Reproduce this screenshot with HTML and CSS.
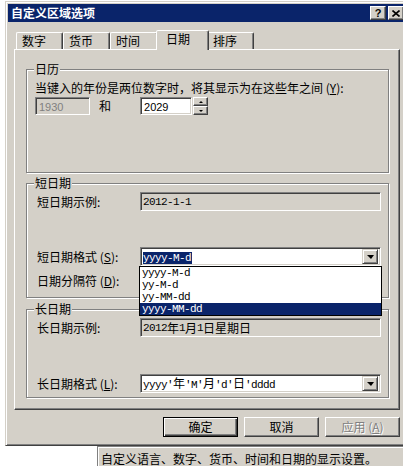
FILE: index.html
```html
<!DOCTYPE html>
<html lang="zh-CN">
<head>
  <meta charset="UTF-8" />
  <meta name="viewport" content="width=device-width, initial-scale=1" />
  <title>自定义区域选项</title>
  <link rel="stylesheet" href="styles.css">
</head>
<body>
  <div class="window">
    <div class="titlebar">
      <span>自定义区域选项</span>
      <div class="title-buttons">
        <span class="title-btn">?</span>
        <span class="title-btn">
          <svg width="8" height="7" viewBox="0 0 8 7"><path d="M0.5 0.5L7.5 6.5M7.5 0.5L0.5 6.5" stroke="#000" stroke-width="1.6" fill="none"/></svg>
        </span>
      </div>
    </div>

    <div class="client">
      <!-- tabs -->
      <div class="tabs">
        <div class="tab">数字</div>
        <div class="tab">货币</div>
        <div class="tab tab-wide">时间</div>
        <div class="tab active">日期</div>
        <div class="tab">排序</div>
      </div>

      <div class="panel">
        <!-- 日历 -->
        <div class="group group-cal">
          <div class="legend">日历</div>
          <div class="cal-text">当键入的年份是两位数字时，将其显示为在这些年之间 (<u>Y</u>):</div>
          <div class="cal-row">
            <div class="edit disabled">1930</div>
            <span class="and">和</span>
            <div class="edit year">2029</div>
            <div class="spin">
              <span class="spin-btn up"></span>
              <span class="spin-btn down"></span>
            </div>
          </div>
        </div>

        <!-- 短日期 -->
        <div class="group group-short">
          <div class="legend">短日期</div>
          <div class="field-row first">
            <span class="label">短日期示例:</span>
            <div class="box readonly"><span class="mono">2012-1-1</span></div>
          </div>
          <div class="field-row format">
            <span class="label">短日期格式 (<u>S</u>):</span>
            <div class="combo-wrap">
              <div class="box combo">
                <span class="combo-text"><span class="mono sel">yyyy-M-d</span></span>
                <span class="drop-btn"></span>
              </div>
              <div class="dropdown">
                <div class="item mono">yyyy-M-d</div>
                <div class="item mono">yy-M-d</div>
                <div class="item mono">yy-MM-dd</div>
                <div class="item mono selected">yyyy-MM-dd</div>
              </div>
            </div>
          </div>
          <div class="field-row sep">
            <span class="label">日期分隔符 (<u>D</u>):</span>
            <!-- liegt unter der aufgeklappten Liste -->
            <div class="box combo">
              <span class="combo-text"></span>
              <span class="drop-btn"></span>
            </div>
          </div>
        </div>

        <!-- 长日期 -->
        <div class="group group-long">
          <div class="legend">长日期</div>
          <div class="field-row first">
            <span class="label">长日期示例:</span>
            <div class="box readonly"><span class="mono">2012</span>年<span class="mono">1</span>月<span class="mono">1</span>日星期日</div>
          </div>
          <div class="field-row format-long">
            <span class="label">长日期格式 (<u>L</u>):</span>
            <div class="box combo">
              <span class="combo-text"><span class="mono">yyyy'</span>年<span class="mono">'M'</span>月<span class="mono">'d'</span>日<span class="mono">'dddd</span></span>
              <span class="drop-btn"></span>
            </div>
          </div>
        </div>
      </div>

      <div class="buttons">
        <div class="btn default">确定</div>
        <div class="btn">取消</div>
        <div class="btn disabled">应用 (<u>A</u>)</div>
      </div>
    </div>
  </div>

  <div class="status">自定义语言、数字、货币、时间和日期的显示设置。</div>
</body>
</html>
```

FILE: styles.css
```css
* {
  box-sizing: border-box;
}

body {
  margin: 0;
  width: 403px;
  height: 466px;
  overflow: hidden;
  background: #fff;
  color: #000;
  font-family: "Noto Sans CJK SC", "Liberation Sans", sans-serif;
  font-size: 12px;
  line-height: 14px;
}

u {
  text-decoration: underline;
  text-underline-offset: 1px;
}

/* Fenster */
.window {
  width: 404px;
  margin: 1px 0 0 5px;
  padding: 2px;
  background: #d4d0c8;
  border: 1px solid;
  border-color: #d4d0c8 #404040 #404040 #d4d0c8;
  box-shadow: inset 1px 1px 0 #fff, inset -1px -1px 0 #808080;
}

.titlebar {
  height: 18px;
  padding: 0 2px 0 3px;
  background: #0a246a;
  color: #fff;
  font-weight: bold;
  display: flex;
  align-items: center;
  justify-content: space-between;
}

.title-buttons {
  display: flex;
  gap: 2px;
}

.title-btn {
  width: 16px;
  height: 14px;
  display: flex;
  align-items: center;
  justify-content: center;
  background: #d4d0c8;
  color: #000;
  font: bold 11px "Liberation Sans", sans-serif;
  border: 1px solid;
  border-color: #fff #404040 #404040 #fff;
  box-shadow: inset -1px -1px 0 #808080;
}

.client {
  padding: 0 6px;
}

/* Registerkarten */
.tabs {
  display: flex;
  align-items: flex-end;
  height: 19px;
  margin: 8px 0 0 2px;
}

.tab {
  width: 47px;
  height: 17px;
  padding: 1px 0 0 5px;
  border: 1px solid;
  border-bottom: 0;
  border-color: #fff #404040 transparent #fff;
  border-radius: 2px 2px 0 0;
  box-shadow: inset -1px 0 0 #808080;
}

.tab-wide {
  width: 48px;
}

.tab.active {
  position: relative;
  z-index: 1;
  width: 53px;
  height: 20px;
  margin: 0 -2px -1px -2px;
  padding: 1px 0 0 9px;
  background: #d4d0c8;
}

.panel {
  height: 361px;
  padding: 0 10px 0 11px;
  border: 1px solid;
  border-color: #fff #404040 #404040 #fff;
  box-shadow: inset -1px -1px 0 #808080;
}

/* Gruppenrahmen */
.group {
  border: 1px solid #808080;
  box-shadow: 1px 1px 0 #fff, inset 1px 1px 0 #fff;
}

.legend {
  width: fit-content;
  margin: -8px 0 0 7px;
  padding: 0 1px;
  background: #d4d0c8;
}

.group-cal {
  margin-top: 19px;
  height: 104px;
}

.group-short {
  margin-top: 10px;
  height: 115px;
}

.group-long {
  margin-top: 11px;
  height: 89px;
}

.cal-text {
  margin: 5px 0 0 8px;
}

.cal-row {
  display: flex;
  align-items: center;
  margin: 2px 0 0 8px;
}

.edit {
  height: 18px;
  padding: 2px 0 0 3px;
  background: #fff;
  font-family: "Liberation Sans", sans-serif;
  font-size: 11px;
  line-height: 14px;
  border: 1px solid;
  border-color: #808080 #fff #fff #808080;
  box-shadow: inset 1px 1px 0 #404040, inset -1px -1px 0 #d4d0c8;
}

.edit.disabled {
  width: 55px;
  background: #d4d0c8;
  color: #808080;
}

.and {
  margin: 0 29px 0 9px;
}

.edit.year {
  width: 52px;
}

.spin {
  display: flex;
  flex-direction: column;
  width: 15px;
  height: 18px;
  margin-left: 1px;
}

.spin-btn {
  flex: 1;
  display: flex;
  align-items: center;
  justify-content: center;
  border: 1px solid;
  border-color: #fff #404040 #404040 #fff;
  box-shadow: inset -1px -1px 0 #808080;
}

.spin-btn::after {
  content: "";
  border-left: 2px solid transparent;
  border-right: 2px solid transparent;
}

.spin-btn.up::after {
  border-bottom: 2px solid #000;
}

.spin-btn.down::after {
  border-top: 2px solid #000;
}

/* Zeilen mit Beschriftung + Feld */
.field-row {
  display: flex;
  align-items: center;
  padding-left: 10px;
}

.field-row.first {
  margin-top: 2px;
}

.field-row.format {
  margin-top: 36px;
}

.field-row.sep {
  margin-top: 5px;
}

.field-row.format-long {
  margin-top: 37px;
}

.label {
  width: 103px;
  flex-shrink: 0;
}

.box {
  width: 241px;
  height: 19px;
  padding: 2px 0 0 2px;
  display: flex;
  align-items: center;
  border: 1px solid;
  border-color: #808080 #fff #fff #808080;
  box-shadow: inset 1px 1px 0 #404040, inset -1px -1px 0 #d4d0c8;
}

.box.readonly {
  align-items: flex-start;
  background: #d4d0c8;
}

.mono {
  font-family: "Liberation Mono", monospace;
  font-size: 11px;
  letter-spacing: -0.6px;
}

.combo {
  background: #fff;
  padding: 2px;
}

.combo-text {
  flex: 1;
  white-space: nowrap;
}

.sel {
  background: #0a246a;
  color: #fff;
  padding: 0 1px 0 0;
}

.drop-btn {
  width: 16px;
  height: 15px;
  display: flex;
  align-items: center;
  justify-content: center;
  background: #d4d0c8;
  border: 1px solid;
  border-color: #d4d0c8 #404040 #404040 #d4d0c8;
  box-shadow: inset 1px 1px 0 #fff, inset -1px -1px 0 #808080;
}

.drop-btn::after {
  content: "";
  border-left: 4px solid transparent;
  border-right: 3px solid transparent;
  border-top: 4px solid #000;
}

.combo-wrap {
  position: relative;
  width: 241px;
  height: 19px;
}

.combo-wrap .combo {
  height: 19px;
}

/* aufgeklappte Liste */
.dropdown {
  position: absolute;
  z-index: 2;
  left: -1px;
  top: 19px;
  width: 243px;
  background: #fff;
  border: 1px solid #000;
}

.item {
  height: 12px;
  line-height: 12px;
  padding-left: 2px;
}

.item.selected {
  background: #0a246a;
  color: #fff;
}

/* Schaltflaechen */
.buttons {
  display: flex;
  justify-content: flex-end;
  gap: 6px;
  margin: 7px 0 6px;
}

.btn {
  width: 75px;
  height: 20px;
  padding-top: 2px;
  text-align: center;
  border: 1px solid;
  border-color: #fff #404040 #404040 #fff;
  box-shadow: inset -1px -1px 0 #808080;
}

.btn.default {
  border-color: #000;
  box-shadow: inset 1px 1px 0 #fff, inset -1px -1px 0 #404040, inset -2px -2px 0 #808080;
}

.btn.disabled {
  color: #808080;
  text-shadow: 1px 1px 0 #fff;
}

/* Statuszeile unten */
.status {
  margin-left: 97px;
  height: 21px;
  padding: 5px 0 0 3px;
  background: #d4d0c8;
  border-top: 1px solid #808080;
  border-left: 1px solid #808080;
  box-shadow: inset 1px 1px 0 #fff;
  white-space: nowrap;
}
```
